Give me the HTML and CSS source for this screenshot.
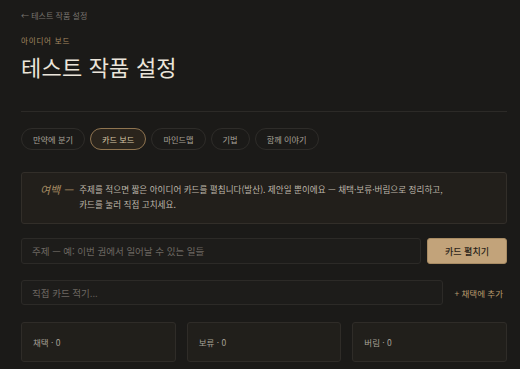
FILE: index.html
```html
<!DOCTYPE html>
<html lang="ko">
<head>
    <meta charset="UTF-8">
    <meta name="viewport" content="width=device-width, initial-scale=1.0">
    <title>테스트 작품 설정 - 아이디어 보드</title>
    <link rel="stylesheet" href="styles.css">
</head>
<body>
    <div class="page">
        <a class="back-link" href="#">← 테스트 작품 설정</a>
        <div class="eyebrow">아이디어 보드</div>
        <h1 class="title">테스트 작품 설정</h1>
        <hr class="divider">

        <div class="tabs">
            <button class="tab">만약에 분기</button>
            <button class="tab active">카드 보드</button>
            <button class="tab">마인드맵</button>
            <button class="tab">기법</button>
            <button class="tab">함께 이야기</button>
        </div>

        <div class="note">
            <span class="note-mark">여백 —</span>
            <p class="note-text">주제를 적으면 짧은 아이디어 카드를 펼칩니다(발산). 제안일 뿐이에요 — 채택·보류·버림으로 정리하고,<br>카드를 눌러 직접 고치세요.</p>
        </div>

        <div class="row">
            <input class="field" type="text" placeholder="주제 — 예: 이번 권에서 일어날 수 있는 일들">
            <button class="primary">카드 펼치기</button>
        </div>

        <div class="row row-add">
            <input class="field" type="text" placeholder="직접 카드 적기...">
            <button class="link-btn">+ 채택에 추가</button>
        </div>

        <div class="columns">
            <div class="column">채택 · 0</div>
            <div class="column">보류 · 0</div>
            <div class="column">버림 · 0</div>
        </div>
    </div>
</body>
</html>
```

FILE: styles.css
```css
body {
    margin: 0;
    background-color: #1b1a18;
    color: #c9c2b6;
    font-family: 'Noto Sans CJK KR', 'Noto Sans', sans-serif;
}
.page {
    padding: 9px 13px 0 21px;
}
.back-link {
    display: block;
    font-size: 8px;
    line-height: 14px;
    color: #7a7570;
    text-decoration: none;
}
.eyebrow {
    margin-top: 12px;
    font-size: 7.5px;
    line-height: 12px;
    letter-spacing: 0.8px;
    color: #a58a62;
}
.title {
    margin: 4px 0 0;
    font-size: 22px;
    line-height: 30px;
    font-weight: 400;
    letter-spacing: 0.2px;
    color: #ebe5da;
}
.divider {
    margin: 30px 0 0;
    border: none;
    border-top: 1px solid #2c2a27;
}
.tabs {
    display: flex;
    gap: 5px;
    margin-top: 16px;
}
.tab {
    height: 22px;
    padding: 0 11px;
    border: 1px solid #2e2c29;
    border-radius: 11px;
    background-color: transparent;
    color: #a8a299;
    font-family: inherit;
    font-size: 8.2px;
}
.tab.active {
    border-color: #8f7450;
    background-color: #2a241c;
    color: #d8c7a6;
}
.note {
    display: flex;
    gap: 6px;
    margin-top: 22px;
    padding: 9px 14px 11px 18px;
    background-color: #221f1b;
    border: 1px solid #322e29;
    border-radius: 3px;
}
.note-mark {
    font-style: italic;
    font-size: 11px;
    line-height: 15px;
    color: #a58a62;
    white-space: nowrap;
}
.note-text {
    margin: 0;
    font-size: 8.6px;
    line-height: 15px;
    color: #bdb6aa;
}
.row {
    display: flex;
    gap: 6px;
    margin-top: 14px;
}
.field {
    flex: 1;
    height: 26px;
    box-sizing: border-box;
    padding: 0 10px;
    background-color: #1d1c1a;
    border: 1px solid #2c2a27;
    border-radius: 3px;
    color: #c9c2b6;
    font-family: inherit;
    font-size: 9.5px;
}
.field::placeholder {
    color: #6d6862;
}
.primary {
    width: 80px;
    height: 26px;
    border: 1px solid #a88b63;
    border-radius: 3px;
    background-color: #c2a37a;
    color: #2b2319;
    font-family: inherit;
    font-size: 9px;
    font-weight: 500;
}
.row-add {
    margin-top: 16px;
    gap: 11px;
}
.row-add .field {
    height: 25px;
}
.link-btn {
    padding: 0 4px 0 0;
    border: none;
    background: none;
    color: #b89a6e;
    font-family: inherit;
    font-size: 8.5px;
}
.columns {
    display: grid;
    grid-template-columns: 1fr 1fr 1fr;
    gap: 11px;
    margin-top: 17px;
}
.column {
    height: 40px;
    box-sizing: border-box;
    padding: 11px 11px 0;
    background-color: #211f1b;
    border: 1px solid #2f2c28;
    border-radius: 3px;
    font-size: 8.5px;
    line-height: 16px;
    color: #a7a197;
}
```
